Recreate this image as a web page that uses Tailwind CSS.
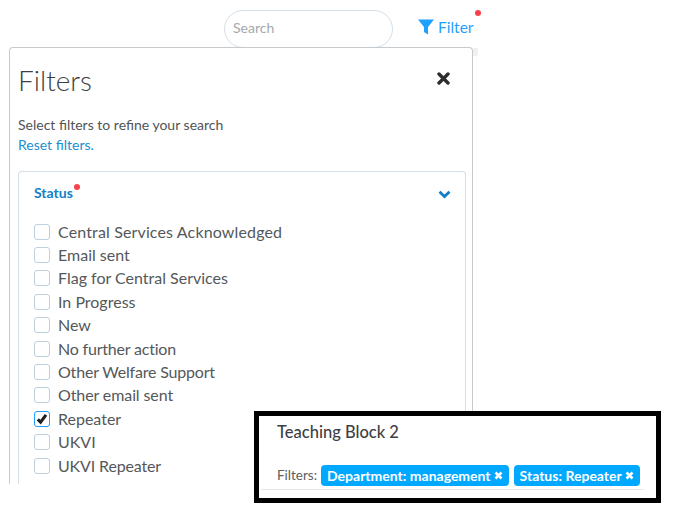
<!DOCTYPE html>
<html lang="en">
<head>
<meta charset="utf-8">
<title>Filters</title>
<script src="https://cdn.jsdelivr.net/npm/@tailwindcss/browser@4"></script>
</head>
<body class="bg-white font-['Lato','Open_Sans',sans-serif]">
<div class="relative w-[692px] h-[523px] overflow-hidden bg-white">
  <header class="h-[47px] pt-[10px] pl-[224px] flex items-start">
    <div class="w-[169px] h-[38px] rounded-full border border-[#d3e0e9] pl-[8px] pb-[3px] flex items-center text-[14px] text-[#a3a9ad]">Search</div>
    <div class="ml-[25px] mt-[8px] flex items-center gap-[4px] text-[#1f9fff] text-[15.5px] leading-[18px] relative">
      <svg class="w-[16px] h-[16px]" viewBox="0 0 16 16"><path d="M0 0.5H16L10 8V15.5L6 13V8Z" fill="#1f9fff"/></svg>
      <span>Filter</span>
      <span class="absolute right-[-8px] top-[-8px] w-[6px] h-[6px] rounded-full bg-[#f5424d]"></span>
    </div>
  </header>

  <div class="absolute left-[473px] top-[48px] w-[5px] h-[8px] bg-[#f0f0f0]"></div>
  <section class="relative ml-[9px] w-[464px] h-[437px] overflow-hidden rounded-t-[4px] border-x border-t border-[#c6cacc] bg-white pl-[8px] pr-[6px]">
    <h1 class="mt-[14px] text-[28px] font-light leading-[36px] text-[#3d4042]">Filters</h1>
    <svg class="absolute right-[22px] top-[24px] w-[13px] h-[13px]" viewBox="0 0 13 13"><path d="M2 2L11 11M11 2L2 11" stroke="#2b2d2f" stroke-width="3.4" stroke-linecap="round"/></svg>
    <p class="mt-[16px] text-[14px] leading-[22px] text-[#505456]">Select filters to refine your search</p>
    <a class="block text-[14px] leading-[18px] text-[#1c8fd0]">Reset filters.</a>
    <div class="relative mt-[17px] h-[318px] rounded-t-[4px] border-x border-t border-[#d6dfe6] pl-[15px] pr-[14px]">
      <div class="flex items-center justify-between h-[45px]">
        <span class="relative mb-[4px] text-[14px] font-bold text-[#1380c4]">Status<span class="absolute right-[-7px] top-[2px] w-[6px] h-[6px] rounded-full bg-[#f5424d]"></span></span>
        <svg class="w-[13px] h-[9px]" viewBox="0 0 13 9"><path d="M1.5 1.8L6.5 6.5L11.5 1.8" fill="none" stroke="#1380c4" stroke-width="2.8"/></svg>
      </div>
      <ul class="text-[16px] text-[#54585a] mt-[3px]">
        <li class="flex items-center h-[23.4px] gap-[8px] tracking-[0.14px]"><span class="w-[16px] h-[16px] rounded-[3px] border border-[#bdd0de]"></span>Central Services Acknowledged</li>
        <li class="flex items-center h-[23.4px] gap-[8px]"><span class="w-[16px] h-[16px] rounded-[3px] border border-[#bdd0de]"></span>Email sent</li>
        <li class="flex items-center h-[23.4px] gap-[8px]"><span class="w-[16px] h-[16px] rounded-[3px] border border-[#bdd0de]"></span>Flag for Central Services</li>
        <li class="flex items-center h-[23.4px] gap-[8px]"><span class="w-[16px] h-[16px] rounded-[3px] border border-[#bdd0de]"></span>In Progress</li>
        <li class="flex items-center h-[23.4px] gap-[8px]"><span class="w-[16px] h-[16px] rounded-[3px] border border-[#bdd0de]"></span>New</li>
        <li class="flex items-center h-[23.4px] gap-[8px] tracking-[-0.2px]"><span class="w-[16px] h-[16px] rounded-[3px] border border-[#bdd0de]"></span>No further action</li>
        <li class="flex items-center h-[23.4px] gap-[8px] tracking-[-0.18px]"><span class="w-[16px] h-[16px] rounded-[3px] border border-[#bdd0de]"></span>Other Welfare Support</li>
        <li class="flex items-center h-[23.4px] gap-[8px] tracking-[-0.1px]"><span class="w-[16px] h-[16px] rounded-[3px] border border-[#bdd0de]"></span>Other email sent</li>
        <li class="flex items-center h-[23.4px] gap-[8px]"><span class="w-[16px] h-[16px] rounded-[3px] border border-[#1f9fff] flex items-center justify-center"><svg class="w-[12px] h-[12px]" viewBox="0 0 12 12"><path d="M1.8 6.4L4.6 9.2L10 1.8" fill="none" stroke="#1d1f21" stroke-width="3"/></svg></span>Repeater</li>
        <li class="flex items-center h-[23.4px] gap-[8px]"><span class="w-[16px] h-[16px] rounded-[3px] border border-[#bdd0de]"></span>UKVI</li>
        <li class="flex items-center h-[23.4px] gap-[8px] tracking-[-0.15px]"><span class="w-[16px] h-[16px] rounded-[3px] border border-[#bdd0de]"></span>UKVI Repeater</li>
      </ul>
    </div>
  </section>

  <aside class="absolute left-[254px] top-[411px] w-[407px] h-[92px] border-[5px] border-black bg-white">
    <h2 class="ml-[18px] mt-[5px] text-[16.5px] leading-[22px] font-medium text-[#3d4042]">Teaching Block 2</h2>
    <div class="ml-[2px] mr-[12px] mt-[22px] pl-[16px] h-[25px] border-b border-[#e8e8e8] flex items-start gap-[4px]">
      <span class="text-[13.5px] leading-[21px] text-[#5b5e60]">Filters:</span>
      <span class="h-[21px] rounded-[4px] bg-[#00a8ff] px-[6px] flex items-center gap-[3px] text-white text-[14px] font-bold">Department: management<svg class="w-[9px] h-[9px]" viewBox="0 0 9 9"><path d="M1.5 1.5L7.5 7.5M7.5 1.5L1.5 7.5" stroke="#fff" stroke-width="2.6"/></svg></span>
      <span class="ml-[1px] h-[21px] rounded-[4px] bg-[#00a8ff] px-[6px] flex items-center gap-[3px] text-white text-[14px] font-bold">Status: Repeater<svg class="w-[9px] h-[9px]" viewBox="0 0 9 9"><path d="M1.5 1.5L7.5 7.5M7.5 1.5L1.5 7.5" stroke="#fff" stroke-width="2.6"/></svg></span>
    </div>
  </aside>
</div>
</body>
</html>
